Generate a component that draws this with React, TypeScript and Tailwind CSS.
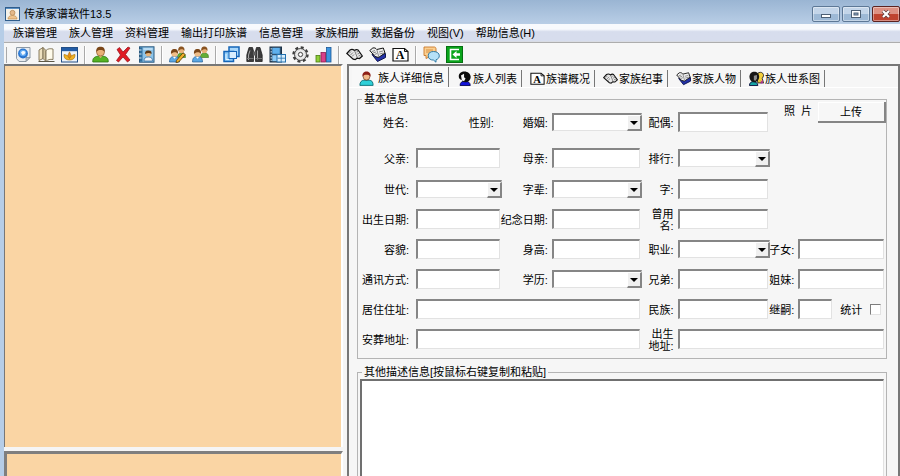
import { useState } from "react";
import type { ReactNode } from "react";
import clsx from "clsx";

const MENUS = [
  "族谱管理",
  "族人管理",
  "资料管理",
  "输出打印族谱",
  "信息管理",
  "家族相册",
  "数据备份",
  "视图(V)",
  "帮助信息(H)",
];

/* ---------- Icons ---------- */

function Icon({ children, small }: { children: ReactNode; small?: boolean }) {
  return (
    <svg viewBox="0 0 17 17" className={clsx("shrink-0", small ? "size-[15px]" : "size-[17px]")} aria-hidden="true">
      {children}
    </svg>
  );
}

const settingsDoc = (
  <>
    <path d="M1.500 1.500h13.500v10l-4 4H4l-2.500-3z" fill="#e9edf1" stroke="#8d99a5" />
    <path d="M15 11.500h-4v4z" fill="#b9c2cb" stroke="#6f7a85" strokeWidth=".6" />
    <circle cx="8" cy="7.500" r="4.900" fill="#2673cf" />
    <circle cx="8" cy="7" r="3.300" fill="#63aaf2" />
    <path d="M6 6.500c1-1.800 3-2 4.500-.5l-1 2.200-2 .8z" fill="#f3f9ff" />
  </>
);

const openBook = (
  <>
    <path d="M1 4l4-2.500v11l-4 2z" fill="#efe2c0" stroke="#7d7153" strokeWidth=".9" />
    <path d="M5 1.500l3 3v11l-3-3z" fill="#cdbf9a" stroke="#7d7153" strokeWidth=".9" />
    <path d="M8 4.500c2-2 4-2 7-1.500v10.500c-3-.5-5 0-7 2z" fill="#fffbeb" stroke="#7d7153" strokeWidth=".9" />
    <path d="M.5 15.500h16" stroke="#5d5848" />
  </>
);

const windowFlower = (
  <>
    <rect x=".5" y="1.500" width="16" height="14.500" fill="#eef4fb" stroke="#234f86" />
    <rect x="1" y="2" width="15" height="3.200" fill="#235da6" />
    <path d="M8.500 5.800l2 4.200-2 3-2-3z" fill="#e88f14" stroke="#9c5c06" strokeWidth=".5" />
    <path d="M3 8.500c2.300.2 4.400 1.500 5.500 4 1.100-2.500 3.200-3.800 5.500-4 .2 3.800-2 5.500-5.500 5.500S2.800 12.300 3 8.500z" fill="#f0b124" stroke="#9c6a06" strokeWidth=".6" />
  </>
);

const greenPerson = (
  <>
    <path d="M.8 16c-.5-4 2-6 7.700-6s8.200 2 7.700 6z" fill="#55b224" stroke="#2a7310" strokeWidth=".8" />
    <circle cx="8.500" cy="6" r="4" fill="#e9b077" stroke="#7d4a1c" strokeWidth=".6" />
    <path d="M4.300 6C4 2 6 .8 8.500.8s4.700 1.200 4.200 5.200c-1-1.500-2-2-4.200-2s-3.200.5-4.200 2z" fill="#7a4618" />
    <path d="M6.500 10.300l2 1.700 2-1.700z" fill="#e9b077" />
  </>
);

const redCross = (
  <path
    d="M2 3.500L4.500 1.500 8 6l5-5 2 1-4.500 6.500 4.500 5.500-2.500 2L8 11l-4.500 5-2-1.500L5.500 9z"
    fill="#e01b24"
    stroke="#8e0d14"
    strokeWidth=".7"
  />
);

const addressBook = (
  <>
    <rect x="1.500" y=".8" width="14.500" height="15.400" fill="#8cc4ea" stroke="#28587e" />
    <rect x="2" y="1.300" width="2.500" height="14.400" fill="#2f6f9f" />
    <path d="M.5 4h3M.5 8h3M.5 12h3" stroke="#dbe7f0" />
    <path d="M5.500 3h9" stroke="#e5f3fd" />
    <circle cx="10.300" cy="8" r="2.600" fill="#e7b47b" />
    <path d="M7 8c0-3 1.500-3.500 3.300-3.500s3.700.5 3.200 3.500c-2-1.500-3.500-1.500-6.500 0z" fill="#5c3714" />
    <path d="M6 15c0-3 1.500-4 4.300-4s4.200 1 4.200 4z" fill="#f1f6fb" stroke="#2d659b" strokeWidth=".7" />
  </>
);

const couple = (
  <>
    <path d="M8.500 11c0-3 1.500-4 4-4s4 1 4 4.500h-8z" fill="#62ae36" stroke="#37721a" strokeWidth=".6" />
    <circle cx="12.300" cy="4.500" r="2.800" fill="#e8b27a" />
    <path d="M9.300 5c-.3-3.500 1.200-4.500 3-4.500s3.500 1 3.200 4.500c-1-2-4-2.500-6.200 0z" fill="#8a5421" />
    <path d="M.5 16c0-4 1.500-5.500 5-5.500s5 1.500 5 5.500z" fill="#5ba7e2" stroke="#235c92" strokeWidth=".7" />
    <circle cx="5.500" cy="7.500" r="3.200" fill="#efbd87" />
    <path d="M2 8c-.3-4 1.300-5 3.500-5S9.300 4 9 8c-1-2.500-5-2.500-7 0z" fill="#7a4618" />
    <path d="M4 11l1.500 1.700L7 11z" fill="#fff" />
  </>
);

const coupleEdit = (
  <>
    {couple}
    <path d="M7.500 14.300l6.500-7.500 2.300 1.900-6.600 7.300-2.700.8z" fill="#f0ae28" stroke="#4f3606" strokeWidth=".8" />
  </>
);

const cascade = (
  <>
    <rect x="6" y="1" width="10" height="9.500" fill="#a9d8fb" stroke="#1565b8" strokeWidth="1.500" />
    <rect x="1" y="5.500" width="9.500" height="10" fill="#8ccaf8" stroke="#1565b8" strokeWidth="1.500" />
    <rect x="6" y="5.500" width="7.500" height="7" fill="#d9eefe" stroke="#1565b8" />
    <path d="M3 8v5.500h3" stroke="#e6f5ff" fill="none" />
  </>
);

const binoculars = (
  <>
    <path d="M3 1.500h3.500l1 3.500v10.500H.8V9z" fill="#3c3c3c" stroke="#161616" strokeWidth=".7" />
    <path d="M14 1.500h-3.500l-1 3.500v10.500h6.700V9z" fill="#3c3c3c" stroke="#161616" strokeWidth=".7" />
    <rect x="7" y="5.500" width="3" height="4" fill="#5d5d5d" />
    <path d="M4 4.500L2.500 9v5M11.500 4.500v9" stroke="#a8a8a8" fill="none" />
    <path d="M1 12.500h6.500M9.500 12.500H16" stroke="#777" />
  </>
);

const serverFilm = (
  <>
    <rect x="1" y="1" width="11.500" height="15" fill="#2f4f6b" stroke="#1c3145" />
    <rect x="3.300" y="1.800" width="7.500" height="6" fill="#5eb0ed" />
    <rect x="3.300" y="9.200" width="7.500" height="6" fill="#8ccbf7" />
    <path d="M2.200 2v13" stroke="#c8d7e3" strokeDasharray="1.500 1.500" />
    <rect x="8" y="8.500" width="8.500" height="7.500" fill="#d9effd" stroke="#2270ae" />
    <path d="M8.500 12.200h7.500M12.200 9v7" stroke="#2270ae" strokeWidth=".8" />
  </>
);

const gear = (
  <>
    <circle cx="8.500" cy="8.500" r="6.900" fill="none" stroke="#3d3d3d" strokeWidth="2.600" strokeDasharray="2.900 2.519" />
    <circle cx="8.500" cy="8.500" r="6" fill="#dcdcdc" stroke="#4a4a4a" />
    <circle cx="8.500" cy="8.500" r="3.800" fill="none" stroke="#f7f7f7" />
    <circle cx="8.500" cy="8.500" r="2.100" fill="#fafafa" stroke="#4a4a4a" />
  </>
);

const barChart = (
  <>
    <rect x="1" y="9.500" width="4" height="6.500" fill="#8fce3a" stroke="#4a7d10" strokeWidth=".8" />
    <rect x="6" y="6.500" width="4.500" height="9.500" fill="#d93f8a" stroke="#8a1c4d" strokeWidth=".8" />
    <rect x="11.500" y="1.500" width="4.500" height="14.500" fill="#3d95e0" stroke="#1b5797" strokeWidth=".8" />
  </>
);

const bookPages = (
  <>
    <path d="M.8 7.500L4 4c1.500-1 3-.8 4.500.5C10 3.300 11 3.300 12 4l4.300 6-2.800 2.500-2.500-.3-1.800 1.500-2-.5z" fill="#e9e9e9" stroke="#111" strokeWidth="1.200" />
    <path d="M8.500 4.500l3 7.500M3 7.500l2-2M4.500 9l2.500-2.500M6 10.500l2-2M10.500 6l1.500-.5M11.500 8l2-.7M12.500 10l2-.7" stroke="#606060" strokeWidth=".8" fill="none" />
  </>
);

const bookOnBlue = (
  <>
    <path d="M3 8.500l5.500 7 8-4V7.500l-7 2z" fill="#2432a8" stroke="#0d1450" />
    <path d="M.8 4.500l3-2.500c2-.5 3 .3 4 1.500l6.500-1.500L16 7l-6.500 4.500L6 10.500z" fill="#efefef" stroke="#111" />
    <path d="M7.800 3.500l2 7.500M3 5.500l3-1M4 7l3-1M5.500 8.500l2.500-1M10 6l4-1M10.500 8l4-1" stroke="#707070" strokeWidth=".8" fill="none" />
  </>
);

const letterPage = (
  <>
    <path d="M1 2.500h11.500L16 5.500V15H1z" fill="#fff" stroke="#111" strokeWidth="1.200" />
    <path d="M12.500 2.500v3H16" fill="none" stroke="#111" />
    <text x="8" y="13.300" textAnchor="middle" className="fill-black font-['Liberation_Serif',serif] text-[12px] font-bold">
      A
    </text>
  </>
);

const chat = (
  <>
    <path d="M1 1h10.500c1 0 1.500 1 1.500 2v5.500L6 11l-3 1.500V9.500H1z" fill="#fbcf90" stroke="#c9782a" strokeWidth=".9" />
    <path d="M3 4h7M3 6h4" stroke="#cf8334" strokeWidth=".8" />
    <path d="M10.500 5.500c3.500 0 5.800 1.700 5.800 4.300 0 2-1.300 3.300-3.300 4v2.400l-2.500-2.100c-3.200 0-5.300-1.600-5.300-4.300s2-4.300 5.300-4.300z" fill="#b5e1f8" stroke="#1f6f9d" strokeWidth=".9" />
  </>
);

const exit = (
  <>
    <rect x=".5" y=".5" width="16" height="16" fill="#0aa51b" stroke="#057011" />
    <path d="M13 3.500H4.500v10H13" fill="none" stroke="#fff" strokeWidth="1.600" />
    <path d="M6.500 8.500l4-3.500v2.200h3.500v2.600h-3.500v2.200z" fill="#fff" />
  </>
);

const cyanPerson = (
  <>
    <path d="M1 16.300c0-4 2-5.800 4.500-5.800h6c3 0 4.500 1.800 4.500 5.800z" fill="#2fd0d8" stroke="#0b6c74" />
    <circle cx="8.500" cy="6.500" r="3.800" fill="#f0b98a" stroke="#5b2a12" strokeWidth=".7" />
    <path d="M4 6.500C3.300 2 6 .5 8.500.5s5.400 1.500 4.600 6c-1-2-2.500-2.300-4.600-2.300s-3.600.3-4.500 2.300z" fill="#8e2018" />
  </>
);

const blackProfile = (
  <>
    <path d="M3.500 16.500c0-3.500 2-5 5.500-5s6 1.500 6 5z" fill="#1414d8" stroke="#000050" />
    <path d="M2 6C2 2.500 5 .5 8.500.5S15.500 3 15.500 6.500s-2.500 6.300-6 6.300c-3 0-3.500-.8-3.500-2.800C3.500 10.500 2 8.500 2 6z" fill="#0a0a0a" />
    <path d="M4.500 5l3.500-2v4l1.700 1.500L8 11.500l-2.500-1z" fill="#f4f4f4" />
  </>
);

const twoFaces = (
  <>
    <path d="M9 6c0-3 1.500-4.500 4-4.500 2 0 3.500 1.500 3.500 4l-1.500 3 1.500 5H10z" fill="#f3cf3c" stroke="#222" />
    <path d="M.5 16.500c0-3 2-4.500 4.500-4.500s5 1.500 5 4.500z" fill="#17a5a5" stroke="#003" />
    <path d="M.5 6.500C.5 3 3 .8 6 .8s5.500 2.200 5.500 5.700-2.500 6.300-5.500 6.300S.5 10 .5 6.500z" fill="#161616" />
    <path d="M5.500 5.500l3.500-1v4l-1.500 2.500-2-.5z" fill="#8c8c8c" />
    <path d="M13 11l3 3M13.500 14.500l2-4" stroke="#b01ab0" />
  </>
);

const TOOL_GROUPS: { label: string; icon: ReactNode }[][] = [
  [
    { label: "设置", icon: settingsDoc },
    { label: "族谱", icon: openBook },
    { label: "窗口", icon: windowFlower },
  ],
  [
    { label: "添加族人", icon: greenPerson },
    { label: "删除族人", icon: redCross },
    { label: "通讯录", icon: addressBook },
  ],
  [
    { label: "编辑配偶", icon: coupleEdit },
    { label: "配偶", icon: couple },
  ],
  [
    { label: "层叠", icon: cascade },
    { label: "查找", icon: binoculars },
    { label: "媒体", icon: serverFilm },
    { label: "选项", icon: gear },
    { label: "统计", icon: barChart },
  ],
  [
    { label: "家族纪事", icon: bookPages },
    { label: "家族人物", icon: bookOnBlue },
    { label: "族谱概况", icon: letterPage },
  ],
  [
    { label: "留言", icon: chat },
    { label: "退出", icon: exit },
  ],
];

const TABS = [
  { label: "族人详细信息", icon: cyanPerson },
  { label: "族人列表", icon: blackProfile },
  { label: "族谱概况", icon: letterPage },
  { label: "家族纪事", icon: bookPages },
  { label: "家族人物", icon: bookOnBlue },
  { label: "族人世系图", icon: twoFaces },
];

/* ---------- Form pieces ---------- */

const SUNKEN = "border-t-2 border-l-2 border-r border-b border-t-[#868686] border-l-[#868686] border-r-[#e2e2e2] border-b-[#e2e2e2] bg-white";

interface FieldProps {
  id: string;
  label: ReactNode;
  first?: boolean;
  span?: string;
}

function Label({ id, label, first }: FieldProps) {
  return (
    <label
      htmlFor={id}
      className={clsx("flex justify-end pt-0.5 text-right leading-[12px] whitespace-nowrap", first ? "pr-[7px]" : "pr-1")}
    >
      {label}
    </label>
  );
}

function TextField(props: FieldProps) {
  return (
    <>
      <Label {...props} />
      <div className={clsx("pr-0.5", props.span)}>
        <input id={props.id} type="text" className={clsx("block h-5 w-full px-1 outline-none", SUNKEN)} />
      </div>
    </>
  );
}

function SelectField(props: FieldProps) {
  return (
    <>
      <Label {...props} />
      <div className="relative">
        <select id={props.id} className={clsx("block h-[18px] w-full appearance-none rounded-none px-1 outline-none", SUNKEN)}>
          <option value=""></option>
        </select>
        <span className="pointer-events-none absolute top-0.5 right-0 flex h-4 w-[15px] items-center justify-center border-t border-r-2 border-b-2 border-l border-t-white border-r-[#858585] border-b-[#858585] border-l-white bg-[#f0f0f0]">
          <svg viewBox="0 0 8 4" className="h-1 w-2" aria-hidden="true">
            <path d="M0 0h8L4 4z" fill="#000" />
          </svg>
        </span>
      </div>
    </>
  );
}

function BasicInfo() {
  return (
    <fieldset className="border border-[#b4b4b4] pb-1">
      <legend className="ml-1 px-0.5 leading-[14px]">基本信息</legend>
      <div className="-mt-1 grid grid-cols-[58px_86fr_50px_90fr_36px_93fr_28px_88fr] grid-rows-[40px_32px_repeat(6,30px)] items-center">
        <span className="pt-0.5 pr-2 text-right">姓名:</span>
        <span className="pt-0.5 pr-2 text-right">性别:</span>
        <SelectField id="marriage" label="婚姻:" />
        <TextField id="spouse" label="配偶:" />
        <div className="col-span-2 flex items-start justify-end gap-1.5 self-start">
          <span className="pt-0.5 whitespace-pre">照  片</span>
          <button
            type="button"
            className="h-[21px] w-[68px] border-r-2 border-b-2 border-[#858585] bg-[#f7f7f7] shadow-[inset_1px_1px_0_#fff]"
          >
            上传
          </button>
        </div>

        <TextField id="father" label="父亲:" first />
        <TextField id="mother" label="母亲:" />
        <SelectField id="rank" label="排行:" />
        <span className="col-span-2" />

        <SelectField id="generation" label="世代:" first />
        <SelectField id="generationName" label="字辈:" />
        <TextField id="courtesyName" label="字:" />
        <span className="col-span-2" />

        <TextField id="birthday" label="出生日期:" first />
        <TextField id="memorialDay" label="纪念日期:" />
        <TextField id="formerName" label={<>曾用<br />名:</>} />
        <span className="col-span-2" />

        <TextField id="looks" label="容貌:" first />
        <TextField id="height" label="身高:" />
        <SelectField id="job" label="职业:" />
        <TextField id="children" label="子女:" />

        <TextField id="phone" label="通讯方式:" first />
        <SelectField id="education" label="学历:" />
        <TextField id="brothers" label="兄弟:" />
        <TextField id="sisters" label="姐妹:" />

        <TextField id="address" label="居住住址:" first span="col-span-3" />
        <TextField id="ethnicity" label="民族:" />
        <Label id="heir" label="继嗣:" />
        <div className="flex items-center gap-2">
          <input id="heir" type="text" className={clsx("h-5 w-[34px] px-1 outline-none", SUNKEN)} />
          <label htmlFor="counted" className="pt-0.5 leading-[12px] whitespace-nowrap">统计</label>
          <input
            id="counted"
            type="checkbox"
            className="size-[11px] shrink-0 appearance-none border border-t-[#7d7d7d] border-r-[#e2e2e2] border-b-[#e2e2e2] border-l-[#7d7d7d] bg-white checked:bg-[#555]"
          />
        </div>

        <TextField id="burial" label="安葬地址:" first span="col-span-3" />
        <TextField id="birthplace" label={<>出生<br />地址:</>} span="col-span-3" />
      </div>
    </fieldset>
  );
}

/* ---------- Window ---------- */

function TitleBar() {
  const button = "flex h-4 w-7 items-center justify-center rounded-xs border shadow-[inset_0_0_0_1px_#ffffff66]";
  const blue = "border-[#5d7896] bg-linear-to-b from-[#c3d5e9] from-50% to-[#9db9d6] to-50%";

  return (
    <header className="flex h-6 shrink-0 items-center gap-1 bg-linear-to-b from-[#9ab5d3] to-[#b9cee6] pl-[5px]">
      <svg viewBox="0 0 15 14" className="mt-1 h-3.5 w-[15px]" aria-hidden="true">
        <rect x=".5" y=".5" width="14" height="13" fill="#f4f1e8" stroke="#2f5d8c" />
        <path d="M1 1.500h13" stroke="#5b90c4" />
        <circle cx="7.500" cy="5.800" r="2.500" fill="#e3b98a" stroke="#a8753c" strokeWidth=".6" />
        <path d="M3 12c0-2.500 2-3.500 4.500-3.500S12 9.500 12 12z" fill="#efc48d" stroke="#b47f3f" strokeWidth=".6" />
      </svg>
      <h1 className="mt-1 flex-1 leading-[14px]">传承家谱软件13.5</h1>
      <div className="mt-1 flex gap-0.5">
        <button type="button" aria-label="最小化" className={clsx(button, blue)}>
          <svg viewBox="0 0 10 10" className="size-2.5" aria-hidden="true">
            <rect x=".5" y="5.500" width="9" height="3" fill="#fff" stroke="#4c5f74" />
          </svg>
        </button>
        <button type="button" aria-label="最大化" className={clsx(button, blue)}>
          <svg viewBox="0 0 10 10" className="size-2.5" aria-hidden="true">
            <rect x=".5" y="1.500" width="9" height="7" fill="#fff" stroke="#4c5f74" />
            <rect x="3" y="4" width="4" height="2" fill="#8fa9c5" stroke="#4c5f74" />
          </svg>
        </button>
        <button
          type="button"
          aria-label="关闭"
          className={clsx(button, "border-[#5c2320] bg-linear-to-b from-[#dd9183] from-50% to-[#bf4430] to-50%")}
        >
          <svg viewBox="0 0 10 10" className="size-2.5" aria-hidden="true">
            <path d="M2 2l6 6M8 2L2 8" stroke="#5a3a3a" strokeWidth="3.600" />
            <path d="M2 2l6 6M8 2L2 8" stroke="#fff" strokeWidth="2.200" />
          </svg>
        </button>
      </div>
    </header>
  );
}

function Toolbar() {
  return (
    <div role="toolbar" className="flex h-[21px] shrink-0 items-center gap-1.5 bg-[#f6f6f6] pt-0.5 pl-0.5">
      <span className="mr-0.5 h-4 w-px bg-[#a9a9a9]" />
      {TOOL_GROUPS.map((group, i) => (
        <div key={i} className="flex items-center gap-1.5">
          {i > 0 && <span className="h-[18px] w-0.5 border-r border-l border-r-white border-l-[#a9a9a9]" />}
          {group.map((tool) => (
            <button key={tool.label} type="button" aria-label={tool.label}>
              <Icon>{tool.icon}</Icon>
            </button>
          ))}
        </div>
      ))}
    </div>
  );
}

export default function App() {
  const [activeTab, setActiveTab] = useState(0);

  return (
    <div className="flex h-screen flex-col overflow-hidden bg-[#f5f5f5] font-['Liberation_Sans','Noto_Sans_CJK_SC',sans-serif] text-[11px] leading-[14px] text-black">
      <TitleBar />

      <div className="flex min-h-0 flex-1 flex-col border-l-4 border-[#b6cde7]">
        <nav className="flex h-[17px] shrink-0 items-center gap-3 bg-linear-to-b from-[#f8fafd] from-30% to-[#d7dded] to-45% pl-[9px]">
          {MENUS.map((menu) => (
            <button key={menu} type="button" className="whitespace-nowrap">
              {menu}
            </button>
          ))}
        </nav>
        <div className="h-0.5 shrink-0 border-t border-[#d9dce4] bg-[#adadad]" />
        <Toolbar />

        <main className="grid min-h-0 flex-1 grid-cols-[339fr_553fr] gap-x-1">
          <div className="flex min-h-0 min-w-0 flex-col">
            <section aria-label="族谱树" className="flex-1 border-t-2 border-r-2 border-l border-t-[#777] border-r-white border-l-[#777] bg-[#fad5a4]" />
            <section aria-label="备注" className="mt-1 h-[25px] border-t-[3px] border-r-2 border-l-[3px] border-t-[#7f7f7f] border-r-white border-l-[#7f7f7f] bg-[#fad5a4]" />
          </div>

          <div className="flex min-h-0 min-w-0 flex-col border-t-2 border-r-2 border-l-2 border-[#777] bg-[#f6f6f6]">
            <div role="tablist" className="flex h-[22px] shrink-0 items-end border-b border-white pl-[3px]">
              {TABS.map((tab, i) => (
                <button
                  key={tab.label}
                  type="button"
                  role="tab"
                  aria-selected={i === activeTab}
                  onClick={() => setActiveTab(i)}
                  className={clsx(
                    "flex items-center border-r border-r-[#777] pr-1 whitespace-nowrap",
                    i === activeTab ? "h-5 gap-1 bg-[#f8f8f8] pt-0.5 pl-[7px]" : "h-[17px] gap-px pl-2"
                  )}
                >
                  <Icon small>{tab.icon}</Icon>
                  {tab.label}
                </button>
              ))}
            </div>

            <form className="flex min-h-0 flex-1 flex-col gap-1.5 pt-1 pr-[11px] pl-2">
              <BasicInfo />
              <fieldset className="flex min-h-0 flex-1 flex-col border border-b-0 border-[#b4b4b4] px-0.5">
                <legend className="ml-0.5 px-0.5 leading-[14px]">
                  <label htmlFor="notes">其他描述信息[按鼠标右键复制和粘贴]</label>
                </legend>
                <textarea
                  id="notes"
                  className="min-h-0 w-full flex-1 resize-none border-t-2 border-r border-l-2 border-t-[#707070] border-r-[#e2e2e2] border-l-[#707070] bg-white p-1 outline-none"
                />
              </fieldset>
            </form>
          </div>
        </main>
      </div>
    </div>
  );
}
